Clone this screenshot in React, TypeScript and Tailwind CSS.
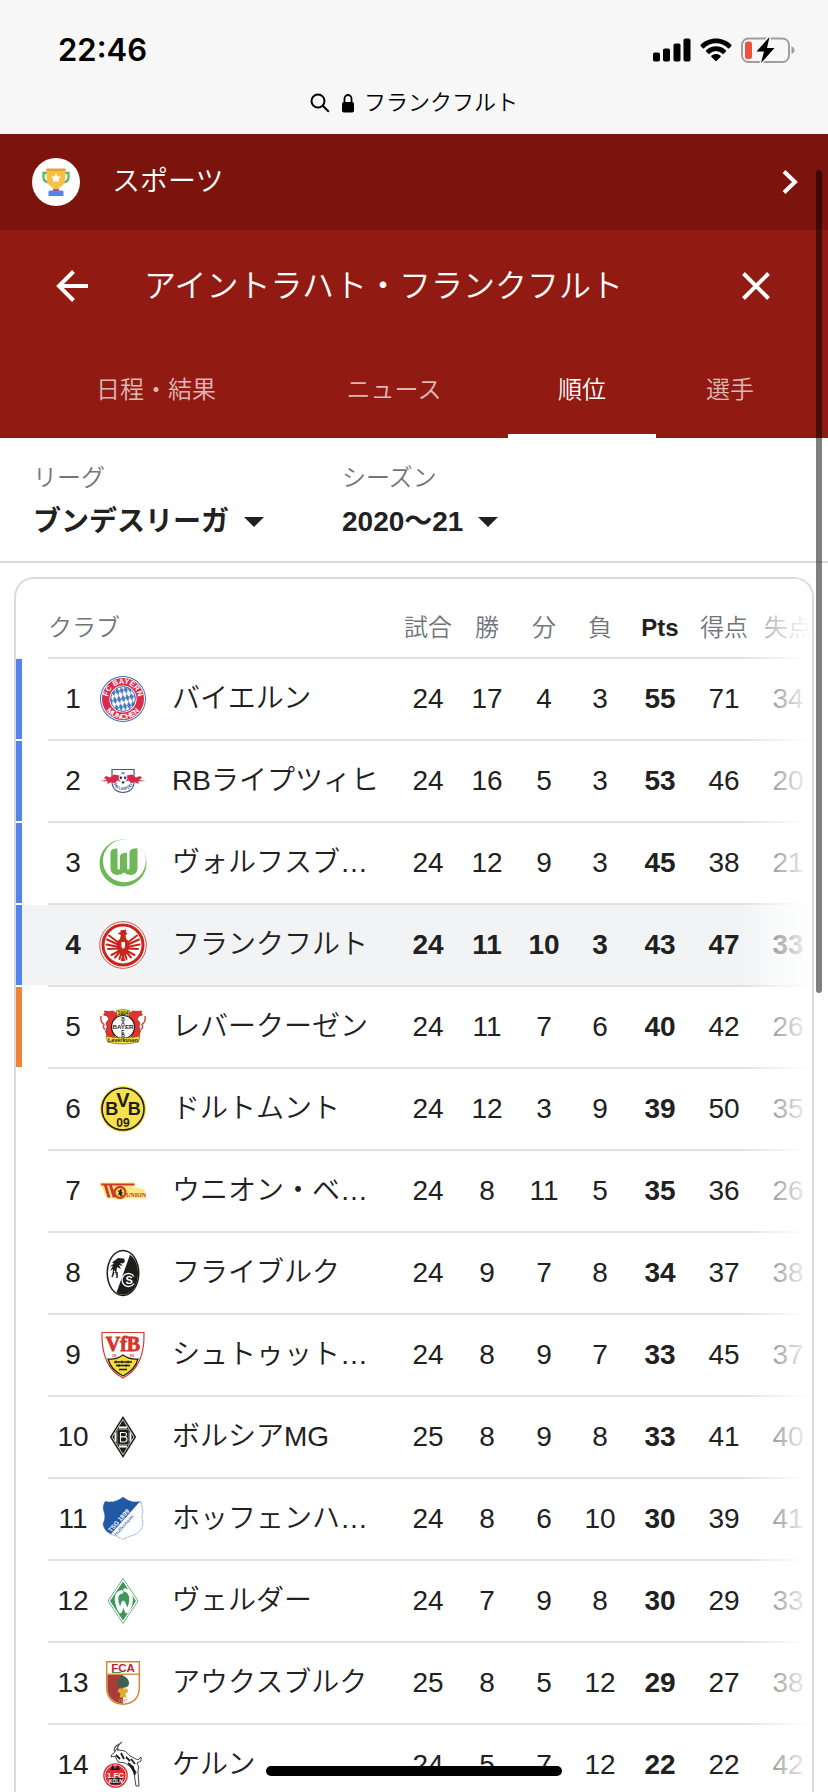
import type { ReactNode } from "react";

const tabs = ["日程・結果", "ニュース", "順位", "選手"];

type Row = {
  club: string;
  stats: number[];
  crest: ReactNode;
  zone?: "blue" | "orange";
  current?: boolean;
};

const columns = ["試合", "勝", "分", "負", "Pts", "得点", "失点"];

function Crest({ label, children }: { label: string; children: ReactNode }) {
  return (
    <svg viewBox="0 0 48 48" className="mx-auto block size-12" role="img" aria-label={label}>
      {children}
    </svg>
  );
}

const bayern = (
  <Crest label="Bayern">
    <defs>
      <pattern id="lozenge" width="4.200" height="8" patternUnits="userSpaceOnUse" patternTransform="rotate(-12)">
        <path d="M2.100 0 4.200 4 2.100 8 0 4z" fill="#4a78be" />
      </pattern>
      <path id="bayernTop" d="M8.800 24a15.200 15.200 0 0 1 30.400 0" />
      <path id="bayernBottom" d="M3.800 24a20.200 20.200 0 0 0 40.400 0" />
    </defs>
    <circle cx="24" cy="24" r="23" fill="#3f6cb5" />
    <circle cx="24" cy="24" r="22" fill="#fff" />
    <circle cx="24" cy="24" r="21" fill="#dc2b4b" />
    <circle cx="24" cy="24" r="13.6" fill="#fff" />
    <circle cx="24" cy="24" r="12.4" fill="url(#lozenge)" stroke="#3f6cb5" strokeWidth="1" />
    <g fill="#fff" fontFamily="Liberation Sans, sans-serif" fontWeight="700" fontSize="7.500" textAnchor="middle">
      <text><textPath href="#bayernTop" startOffset="50%">FC BAYERN</textPath></text>
      <text><textPath href="#bayernBottom" startOffset="50%">MÜNCHEN</textPath></text>
    </g>
  </Crest>
);

const leipzig = (
  <Crest label="Leipzig">
    <path d="M13 12.500h22v12c0 7-4.500 11-11 11s-11-4-11-11z" fill="#fff" stroke="#48577d" strokeWidth="1.200" />
    <path d="M1 24l7-1-3-2 2-2 4 1.500 4-3 5 1 2.500 3-1.500 3-3-1-2 3-3-1.500-5 2 1-2.500z" fill="#d6294a" />
    <path d="M47 24l-7-1 3-2-2-2-4 1.500-4-3-5 1-2.500 3 1.500 3 3-1 2 3 3-1.500 5 2-1-2.500z" fill="#d6294a" />
    <circle cx="24" cy="21" r="4.200" fill="#fff" stroke="#b7bfce" strokeWidth=".5" />
    <path d="M22 15.500h4l-2 1.500zM20.500 20l2-.8.6 2.200-1.600 1zM27.500 20l-2-.8-.6 2.200 1.600 1zM22.600 24.500h3l-.6 2h-1.800z" fill="#1c2e5b" />
    <path id="leipzigArc" d="M14.500 27c2 8 17 8 19 0" fill="none" />
    <text fontFamily="Liberation Sans, sans-serif" fontSize="4.200" fontWeight="700" fill="#48577d" textAnchor="middle">
      <textPath href="#leipzigArc" startOffset="50%">RB LEIPZIG</textPath>
    </text>
  </Crest>
);

const wolfsburg = (
  <Crest label="Wolfsburg">
    <circle cx="24" cy="24" r="23.500" fill="#6fb857" />
    <circle cx="25.400" cy="21.800" r="21.400" fill="#fff" />
    <path d="M11.500 13.500q0-3.800 7-4V29q0 1.500 1.300 1.500T21 29V17.500q0-3.500 7-3.700V29q0 1.500 1.200 1.500T30.500 29V13.300q0-3.800 8-4V29q0 7-7 7-4 0-6.500-2.400Q22.500 36 18.500 36q-7 0-7-7z" fill="#6fb857" />
  </Crest>
);

const frankfurt = (
  <Crest label="Frankfurt">
    <circle cx="24" cy="24" r="23.300" fill="#fff" stroke="#c9251c" strokeWidth=".8" />
    <circle cx="24" cy="24" r="20" fill="none" stroke="#c9251c" strokeWidth="3" />
    <g stroke="#c9251c" strokeWidth="2" fill="none" strokeLinecap="round">
      <path d="M20 22 10 14.500M20 24 8 18.500M20 26 7.500 23.500M20 27.500l-11 .5M28 22l10-7.500M28 24l12-5.500M28 26l12.500-2.500M28 27.500l11 .5M21 29.500 12.500 34M27 29.500l8.500 4.500M20 32l-4 4.500M28 32l4 4.500M22 33l-1.500 5M26 33l1.500 5" />
    </g>
    <path d="M22 9h4l.8-1.500.2 3.500 1.500 2-2 1 .7 4 3 2.500-1 9.500-4 5 1 5h-4.400l1-5-4-5-1-9.500 3.200-2.500.8-4-3-1.500 2.500-1.500z" fill="#c9251c" />
    <path d="M22.500 21h3.500v5l-1.800 2-1.700-2z" fill="#fff" />
  </Crest>
);

const leverkusen = (
  <Crest label="Leverkusen">
    <g fill="#e3332c" stroke="#6b2024" strokeWidth=".6">
      <path d="M18 10.500 14 8l-4 .5-4.500-.5L6 10l-1.500 2L8 13l2 3-3 4 1 4-1.500 4L8 33l5 2 3-1-3-7 1-8 4-5z" />
      <path d="M30 10.500 34 8l4 .5 4.500-.5-.5 2 1.500 2-3.500 1-2 3 3 4-1 4 1.500 4L40 33l-5 2-3-1 3-7-1-8-4-5z" />
    </g>
    <path d="M2 13q-1 6 3 8.500-1.500 3 1 5M46 13q1 6-3 8.500 1.500 3-1 5" fill="none" stroke="#d9473e" strokeWidth="1.500" />
    <circle cx="24" cy="24" r="11.500" fill="#fff" stroke="#1d1d1b" strokeWidth="1.200" />
    <g fontFamily="Liberation Sans, sans-serif" fontWeight="700" textAnchor="middle" fill="#1d1d1b">
      <text x="24" y="26.200" fontSize="6.200">BAYER</text>
      <g fontSize="5"><text x="24" y="17.500">B</text><text x="24" y="21.700">A</text><text x="24" y="30.500">E</text><text x="24" y="34.500">R</text></g>
      <path d="M17.500 7.500q6.500-2 13 0v5q-6.500-1.500-13 0zM7 33q17 4 34 0l-1.500 6q-15.500 4-31 0z" fill="#f6dd3a" stroke="#5b4d18" strokeWidth=".6" />
      <text x="24" y="11.800" fontSize="5">1904</text>
      <text x="24" y="39.300" fontSize="5.400">Leverkusen</text>
    </g>
  </Crest>
);

const dortmund = (
  <Crest label="Dortmund">
    <circle cx="24" cy="24" r="23" fill="#f6e14b" />
    <circle cx="24" cy="24" r="21" fill="none" stroke="#1d1d1b" strokeWidth="1.600" />
    <g fontFamily="Liberation Sans Narrow, Liberation Sans, sans-serif" fontWeight="700" textAnchor="middle" fill="#1d1d1b">
      <text x="12.800" y="30" fontSize="18">B</text>
      <text x="35.200" y="30" fontSize="18">B</text>
      <text x="24" y="22" fontSize="20">V</text>
      <text x="24" y="41.500" fontSize="12">09</text>
    </g>
  </Crest>
);

const union = (
  <Crest label="Union">
    <path d="M1 15.500h35v4h-5l14.500 2.500 2 9.500H30l-5 1q-6 1-9-1l-9-.5-4-11H1z" fill="#f7ea85" />
    <path d="M2 16.500h33.500v2H13l1.200 4H17v2h-2.200l1.800 6h-2.900L10 18.500H8l3.500 12h-3L5 18.500H2.500z" fill="#cf3a2b" />
    <circle cx="21" cy="25.300" r="5.500" fill="#f7df39" stroke="#cf3a2b" strokeWidth="2.200" />
    <path d="M18.500 23l2 1 .5-2 2 .5-.5 2.500 2 1-2 .5 1 2.500-2 .5-.5-2-2 1 1-3z" fill="#1d1d1b" />
    <text x="37" y="30" textAnchor="middle" fontFamily="Liberation Serif, serif" fontSize="6" fontWeight="700" fill="#c9252f">UNION</text>
  </Crest>
);

const freiburg = (
  <Crest label="Freiburg">
    <ellipse cx="24" cy="24" rx="16.500" ry="23.300" fill="#1d1d1b" />
    <ellipse cx="24" cy="24" rx="15" ry="21.800" fill="#fff" />
    <path d="M31 5.800C36 9.500 39 16 39 24c0 12-6.500 21.800-15 21.800-2.500 0-4.500-.7-6.500-2.200z" fill="#1d1d1b" />
    <path d="M15 12l4-3 6 .5 1 3-2 2-3-.5 3 3-4-1 2 4-4-2-1 8-1.500-5-2 4 .5-5-3 2 3-5-3 .5 4-3-2-1z" fill="#1d1d1b" />
    <path d="M15 23l-2 5M18 23v6" stroke="#1d1d1b" strokeWidth="1.500" />
    <path d="M35 27.500a6.500 6.500 0 1 0 0 7" fill="none" stroke="#fff" strokeWidth="1.300" />
    <text x="30.200" y="35" textAnchor="middle" fontFamily="Liberation Sans, sans-serif" fontWeight="700" fontSize="11" fill="#fff">S</text>
  </Crest>
);

const stuttgart = (
  <Crest label="Stuttgart">
    <path d="M3 1.500h42C45.500 20 42 38 24 47 6 38 2.500 20 3 1.500z" fill="#fff" stroke="#d63a31" strokeWidth="1.200" />
    <path d="M9 28q8 1 15-4 7 5 15 4-3 11-15 17Q12 39 9 28z" fill="#f4dc3a" stroke="#1d1d1b" strokeWidth="1.200" />
    <path d="M15 31h18M17 34.500h14M20 38.500h8" stroke="#1d1d1b" strokeWidth="1.500" />
    <path d="M17 29.500v3M23 29.500v3M29 29.500v3M20 33v3M27 33v3" stroke="#1d1d1b" strokeWidth="1" />
    <g fill="#d6332b" stroke="#d6332b" fontFamily="Liberation Serif, serif" fontWeight="700" textAnchor="middle">
      <text x="24" y="19.500" fontSize="20" strokeWidth=".8">VfB</text>
      <g fontSize="4.500" stroke="none"><text x="15" y="26">18</text><text x="33" y="26">93</text></g>
    </g>
  </Crest>
);

const gladbach = (
  <Crest label="Gladbach">
    <path d="M24 3 37.200 24 24 45 10.800 24z" fill="#1d1d1b" />
    <path d="M24 6.500 35 24 24 41.500 13 24z" fill="none" stroke="#fff" strokeWidth=".8" />
    <path d="M20 14.500h8M20 33.500h8M16.500 19.500v9M31.500 19.500v9" stroke="#fff" strokeWidth="1.800" />
    <rect x="18" y="16.500" width="12" height="15" rx="2" fill="#1d1d1b" stroke="#aaa" strokeWidth=".7" />
    <path d="M21.500 19.500h3.500q2.500 0 2.500 2t-2 2.300q2.500.2 2.500 2.500T25.500 29h-4zM21.500 23.900h4" fill="none" stroke="#fff" strokeWidth="1.100" />
  </Crest>
);

const hoffenheim = (
  <Crest label="Hoffenheim">
    <path d="M6 6.500q10 2 18-4.500 8 6.500 18 4.500L44 17q-2 5 0 10-1 10-9 13-7 2-11 4.500Q18 41 12 39.500 5 36 4 29q3-6 1-12-2-5 1-10.500z" fill="#fff" stroke="#7798bd" strokeWidth=".8" strokeDasharray="2 .6" />
    <path d="M6 6.500q10 2 18-4.500 8 6.500 17 4.500L12 39q-7-3-8-10 3-6 1-12-2-5 1-10.500z" fill="#2159a4" />
    <g transform="rotate(-48 24 24)" fontFamily="Liberation Sans, sans-serif" fontWeight="700" textAnchor="middle">
      <text x="20" y="24" fontSize="6.200" fill="#fff">TSG 1899</text>
      <text x="20" y="30.500" fontSize="4.800" fill="#5b83b5">Hoffenheim</text>
    </g>
  </Crest>
);

const werder = (
  <Crest label="Werder">
    <path d="M24 1.500 39 24 24 46.500 9 24z" fill="#fff" stroke="#469b63" strokeWidth="1" strokeDasharray="2 .5" />
    <path d="M24 4.500 37 24 24 43.500 11 24z" fill="#3f9659" />
    <path d="M22.500 15q-5 1-5 6.500 0 6 3.800 13l3-9 3.500 9q5-7 4.200-14-1-6.500-6-7.500" fill="none" stroke="#fff" strokeWidth="3.600" strokeLinejoin="round" strokeLinecap="round" />
  </Crest>
);

const augsburg = (
  <Crest label="Augsburg">
    <path d="M7.700 2.700h32.600V28q0 16-16.300 17.300Q7.700 44 7.700 28z" fill="#fff" stroke="#d08a3c" strokeWidth="1.500" />
    <path d="M8.500 16H24v28.500Q8.500 43 8.500 28z" fill="#a93c36" />
    <path d="M8 15.200h32" stroke="#d08a3c" strokeWidth="1.400" />
    <text x="24" y="13" fontFamily="Liberation Sans, sans-serif" fontSize="11.500" fontWeight="700" fill="#b8292f" textAnchor="middle">FCA</text>
    <path d="M13 13.500h9" stroke="#3f8a55" strokeWidth=".9" />
    <path d="M24 16.500q6 2.500 6 8 0 4-6 4.300-6-.3-6-4.300 0-5.500 6-8z" fill="#3c6350" />
    <path d="M20 29.500h8l1.500 3-3 2 1 4h-7l1-4-3-2z" fill="#d9b034" />
    <text x="24" y="42.500" fontFamily="Liberation Sans, sans-serif" fontSize="4" fontWeight="700" fill="#d48a80" textAnchor="middle">1907</text>
  </Crest>
);

const koeln = (
  <Crest label="Köln">
    <path d="M15 12q-3 1-3 4l4-1 3 6 7 1 7 5 2 5 2 13h3l-1-15q2-4-1-8l4-2v-4l-3 3-8-4-5-5-6-1-2-2z" fill="#fff" stroke="#333" strokeWidth=".9" />
    <path d="M16 11q-3-4 4-8M19 10q-2-5 4-9" fill="none" stroke="#555" strokeWidth="1.200" />
    <path d="M17 14l4 4M22 12l3 6M27 16l4 4M32 18l4 5M33 26l4 6M29 22l5 4 2 8" stroke="#1d1d1b" strokeWidth="1.800" />
    <circle cx="16.500" cy="34.500" r="12.300" fill="#de2c35" />
    <circle cx="16.500" cy="34.500" r="10.600" fill="none" stroke="#fff" strokeWidth=".8" />
    <path d="M11.500 29l2-5.500 2 4h1.500l2-4 2 5.500z" fill="#1d1d1b" />
    <path d="M10 37h13.500l-2 6.500H12z" fill="#1d1d1b" />
    <g fill="#fff" fontFamily="Liberation Sans, sans-serif" fontWeight="700" textAnchor="middle">
      <text x="16.500" y="36.500" fontSize="7.800">1.FC</text>
      <text x="16.800" y="42" fontSize="4.800">KÖLN</text>
    </g>
  </Crest>
);

const rows: Row[] = [
  { club: "バイエルン", stats: [24, 17, 4, 3, 55, 71, 34], crest: bayern, zone: "blue" },
  { club: "RBライプツィヒ", stats: [24, 16, 5, 3, 53, 46, 20], crest: leipzig, zone: "blue" },
  { club: "ヴォルフスブ…", stats: [24, 12, 9, 3, 45, 38, 21], crest: wolfsburg, zone: "blue" },
  { club: "フランクフルト", stats: [24, 11, 10, 3, 43, 47, 33], crest: frankfurt, zone: "blue", current: true },
  { club: "レバークーゼン", stats: [24, 11, 7, 6, 40, 42, 26], crest: leverkusen, zone: "orange" },
  { club: "ドルトムント", stats: [24, 12, 3, 9, 39, 50, 35], crest: dortmund },
  { club: "ウニオン・ベ…", stats: [24, 8, 11, 5, 35, 36, 26], crest: union },
  { club: "フライブルク", stats: [24, 9, 7, 8, 34, 37, 38], crest: freiburg },
  { club: "シュトゥット…", stats: [24, 8, 9, 7, 33, 45, 37], crest: stuttgart },
  { club: "ボルシアMG", stats: [25, 8, 9, 8, 33, 41, 40], crest: gladbach },
  { club: "ホッフェンハ…", stats: [24, 8, 6, 10, 30, 39, 41], crest: hoffenheim },
  { club: "ヴェルダー", stats: [24, 7, 9, 8, 30, 29, 33], crest: werder },
  { club: "アウクスブルク", stats: [25, 8, 5, 12, 29, 27, 38], crest: augsburg },
  { club: "ケルン", stats: [24, 5, 7, 12, 22, 22, 42], crest: koeln },
];

function StatusBar() {
  return (
    <header className="h-[134px] shrink-0 bg-[#f7f7f7] text-black">
      <div className="flex items-center justify-between pt-[30px] pr-[33px] pl-[58px]">
        <time className="font-['Inter',sans-serif] text-[31px] leading-10 font-semibold">22:46</time>
        <div className="flex items-center gap-[9px]">
          <svg viewBox="0 0 38 24" className="h-6 w-[38px]" aria-hidden="true">
            <rect x="0" y="14.500" width="7" height="9" rx="1.800" />
            <rect x="10" y="10.500" width="7" height="13" rx="1.800" />
            <rect x="20.500" y="5.500" width="7" height="18" rx="1.800" />
            <rect x="30.500" y=".5" width="7" height="23" rx="1.800" />
          </svg>
          <svg viewBox="0 0 32 24" className="h-6 w-8" aria-hidden="true">
            <path d="M16 .5c6 0 11.300 2.300 15.300 6.200.4.400.4.900 0 1.300l-2.100 2.200c-.4.400-.9.400-1.300 0A17 17 0 0 0 16 5.300 17 17 0 0 0 4.100 10.200c-.4.400-.9.400-1.300 0L.7 8c-.4-.4-.4-.9 0-1.300C4.700 2.800 10 .5 16 .5z" />
            <path d="M16 8.300c3.900 0 7.300 1.500 9.900 3.900.4.400.4.900 0 1.300l-2.200 2.200c-.3.400-.9.400-1.300 0A9.300 9.300 0 0 0 16 13.100a9.300 9.300 0 0 0-6.400 2.600c-.4.400-1 .4-1.300 0l-2.200-2.200c-.4-.4-.4-.9 0-1.300A14.500 14.500 0 0 1 16 8.300z" />
            <path d="M16 16c1.700 0 3.300.6 4.500 1.600.4.400.4.900 0 1.300l-3.800 3.900c-.4.400-1 .4-1.400 0l-3.800-3.900c-.4-.4-.4-.9 0-1.300A7 7 0 0 1 16 16z" />
          </svg>
          <svg viewBox="0 0 54 28" className="h-7 w-[54px]" aria-hidden="true">
            <rect x="1" y="2.500" width="47" height="23.500" rx="6.500" fill="none" stroke="#9e9e9e" strokeWidth="2" />
            <path d="M50.500 10.500q3 1 3 3.700t-3 3.700z" fill="#9e9e9e" />
            <rect x="4" y="5.500" width="7" height="17.500" rx="2.500" fill="#ee5140" />
            <path d="M28.500 1 15.500 15.500h7.500L20 27l13.500-15H26z" stroke="#f7f7f7" strokeWidth="3" paintOrder="stroke" />
          </svg>
        </div>
      </div>
      <div className="flex items-center justify-center pt-[17px]">
        <svg viewBox="0 0 20 20" className="size-5" fill="none" stroke="#000" strokeWidth="2" aria-hidden="true">
          <circle cx="8" cy="8" r="6.500" />
          <path d="m12.800 12.800 6 6" />
        </svg>
        <svg viewBox="0 0 14 20" className="ml-[11px] h-5 w-[14px]" aria-hidden="true">
          <path d="M3.500 10V5.500a3.500 3.500 0 0 1 7 0V10" fill="none" stroke="#000" strokeWidth="1.800" />
          <rect x="1" y="9" width="12" height="10.500" rx="1.800" />
        </svg>
        <span className="ml-[9px] text-[22px] leading-8">フランクフルト</span>
      </div>
    </header>
  );
}

function Filter({ id, label, value, width }: { id: string; label: string; value: string; width: string }) {
  return (
    <div className={width}>
      <label htmlFor={id} className="block text-[24px] leading-9 text-[#757575]">{label}</label>
      <div className="flex items-center gap-[15px] pt-[6px]">
        <select id={id} className="field-sizing-content cursor-pointer appearance-none bg-transparent text-[28px] leading-10 font-bold text-[#212121]">
          <option>{value}</option>
        </select>
        <svg viewBox="0 0 20 10" className="pointer-events-none h-[10px] w-5 fill-[#212121]" aria-hidden="true">
          <path d="M0 0h20L10 10z" />
        </svg>
      </div>
    </div>
  );
}

export default function App() {
  return (
    <div className="relative flex h-screen flex-col overflow-hidden bg-white font-['Liberation_Sans','Noto_Sans_CJK_JP',sans-serif] font-[350] text-[#212121]" lang="ja">
      <StatusBar />

      <a href="#sports" className="flex h-24 shrink-0 items-center bg-[#7b140c] pr-[30px] pl-8 text-white">
        <svg viewBox="0 0 48 48" className="size-12" aria-hidden="true">
          <circle cx="24" cy="24" r="24" fill="#fff" />
          <path d="M15 15h-3.500v4q0 5 5.500 5.500M33 15h3.500v4q0 5-5.500 5.500" fill="none" stroke="#5bb974" strokeWidth="2.400" />
          <path d="M14.500 11h19v9q0 6-4.500 8.500-3 1.500-3.200 4.500h-3.600q-.2-3-3.200-4.500-4.500-2.500-4.500-8.500z" fill="#f5c043" />
          <path d="M14.500 10.500h19V13h-19z" fill="#e3a03b" />
          <path d="m24 15 1.500 3.300 3.500.4-2.600 2.400.7 3.500-3.100-1.800-3.100 1.800.7-3.500-2.600-2.400 3.500-.4z" fill="#fff" />
          <path d="M21 31h6v2h-6z" fill="#dd5144" />
          <path d="M18 32.500h12q1.500 0 1.500 1.500v4h-15v-4q0-1.500 1.500-1.500z" fill="#5383ec" />
        </svg>
        <span className="ml-8 grow text-[28px] leading-10">スポーツ</span>
        <svg viewBox="0 0 16 24" className="h-6 w-4" fill="none" stroke="#fff" strokeWidth="4" aria-hidden="true">
          <path d="m2 1.500 11 10.500L2 22.500" />
        </svg>
      </a>

      <section className="shrink-0 bg-[#911b12] text-white">
        <div className="flex h-28 items-center pr-[58px] pl-[56px]">
          <button type="button" aria-label="戻る">
            <svg viewBox="0 0 32 32" className="size-8" fill="none" stroke="#fff" strokeWidth="4" aria-hidden="true">
              <path d="M32 16H3M17.500 1.500 3 16l14.500 14.500" />
            </svg>
          </button>
          <h1 className="ml-14 grow text-[32px] leading-10">アイントラハト・フランクフルト</h1>
          <button type="button" aria-label="閉じる">
            <svg viewBox="0 0 28 28" className="size-7" fill="none" stroke="#fff" strokeWidth="4" aria-hidden="true">
              <path d="m1.500 1.500 25 25M26.500 1.500l-25 25" />
            </svg>
          </button>
        </div>
        <nav className="grid h-24 grid-cols-[248fr_228fr_148fr_148fr] pr-6 pl-8">
          {tabs.map((tab) => (
            <a
              key={tab}
              href={`#${tab}`}
              className={
                tab === "順位"
                  ? "flex items-center justify-center border-b-4 border-white pt-1 text-[24px]"
                  : "flex items-center justify-center border-b-4 border-transparent pt-1 text-[24px] text-white/70"
              }
            >
              {tab}
            </a>
          ))}
        </nav>
      </section>

      <section className="flex h-[125px] shrink-0 border-b-2 border-[#dadce0] pt-[22px] pl-[33px]">
        <Filter id="league" label="リーグ" value="ブンデスリーガ" width="w-[309px]" />
        <Filter id="season" label="シーズン" value="2020〜21" width="w-[309px]" />
      </section>

      <main className="relative mx-[14px] mt-[14px] shrink-0 overflow-hidden rounded-t-[20px] border-2 border-b-0 border-[#dadce0]">
        <table className="w-[calc(100%+8px)] table-fixed border-separate border-spacing-0 text-center">
          <colgroup>
            <col className="w-8" />
            <col className="w-[50px]" />
            <col className="w-[50px]" />
            <col />
            <col className="w-[60px]" />
            <col className="w-[58px]" />
            <col className="w-[56px]" />
            <col className="w-[56px]" />
            <col className="w-16" />
            <col className="w-16" />
            <col className="w-16" />
          </colgroup>
          <thead>
            <tr className="h-20 text-[24px] text-[#70757a]">
              <td />
              <th colSpan={3} className="border-b-2 border-[#e0e0e0] p-0 pt-5 text-left font-[350]">クラブ</th>
              {columns.map((column) => (
                <th
                  key={column}
                  className={
                    column === "Pts"
                      ? "border-b-2 border-[#e0e0e0] p-0 pt-5 font-bold text-[#212121]"
                      : "border-b-2 border-[#e0e0e0] p-0 pt-5 font-[350] whitespace-nowrap"
                  }
                >
                  {column}
                </th>
              ))}
            </tr>
          </thead>
          <tbody>
            {rows.map((row, index) => (
              <tr key={row.club} className={row.current ? "h-[82px] bg-[#f1f3f4] text-[28px]" : "h-[82px] text-[28px]"}>
                <td className="border-b-2 border-white p-0">
                  {row.zone && <div className={row.zone === "blue" ? "h-20 w-[6px] bg-[#5383ec]" : "h-20 w-[6px] bg-[#ee8339]"} />}
                </td>
                <td className={row.current ? "border-b-2 border-[#e0e0e0] p-0 font-bold" : "border-b-2 border-[#e0e0e0] p-0"}>{index + 1}</td>
                <td className="border-b-2 border-[#e0e0e0] p-0">{row.crest}</td>
                <td className="border-b-2 border-[#e0e0e0] p-0 pl-6 text-left whitespace-nowrap">{row.club}</td>
                {row.stats.map((stat, i) => (
                  <td
                    key={columns[i]}
                    className={i === 4 || row.current ? "border-b-2 border-[#e0e0e0] p-0 font-bold" : "border-b-2 border-[#e0e0e0] p-0"}
                  >
                    {stat}
                  </td>
                ))}
              </tr>
            ))}
          </tbody>
        </table>
        <div className="pointer-events-none absolute inset-y-0 right-0 w-[72px] bg-linear-to-r from-white/0 via-white/60 to-white" />
      </main>

      <div className="absolute top-[170px] right-[6px] h-[823px] w-[6px] rounded-full bg-black/50" />
      <div className="absolute bottom-4 left-1/2 h-[10px] w-[296px] -translate-x-1/2 rounded-full bg-black" />
    </div>
  );
}
